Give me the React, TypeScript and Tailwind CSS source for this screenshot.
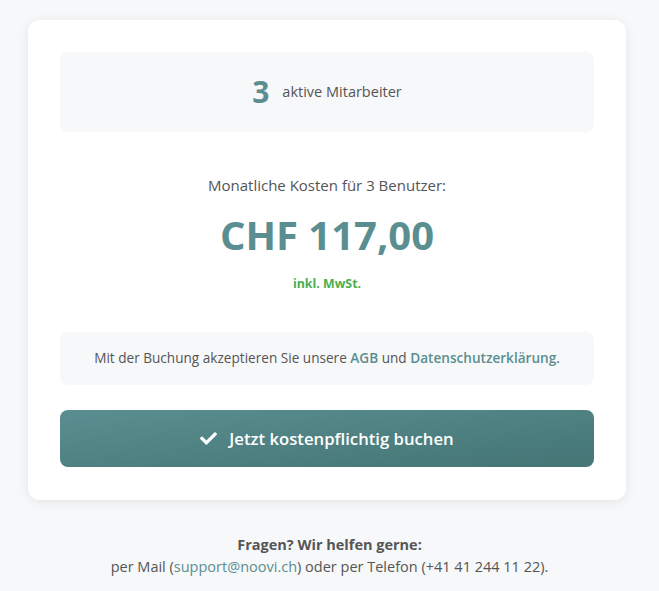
import { FaCheck } from "react-icons/fa";

const FONT = { fontFamily: '"Open Sans", "Noto Sans", sans-serif' };

export default function App() {
  return (
    <div className="min-h-[591px] bg-[#f7f8fa] pt-5 text-[#555]" style={FONT}>
      {/* Card */}
      <div className="ml-[28px] w-[598px] rounded-xl bg-white px-8 pt-8 pb-[33px] shadow-[0_2px_12px_rgba(0,0,0,0.08)]">
        {/* Users */}
        <div className="flex h-20 items-center justify-center gap-[13px] rounded-lg bg-[#f7f8fa]">
          <span className="text-[30px] font-bold leading-none text-[#5a8e90]">3</span>
          <span className="text-[14.5px] text-[#555]">aktive Mitarbeiter</span>
        </div>

        {/* Price */}
        <div className="flex flex-col items-center pt-[41px]">
          <p className="text-[15px] leading-6 text-[#555]">Monatliche Kosten für 3 Benutzer:</p>
          <p className="mt-[14px] text-[40px] font-bold leading-[48px] text-[#5a8e90]">CHF 117,00</p>
          <p className="mt-[17px] text-[12.4px] font-bold leading-4 text-[#4caf50]">inkl. MwSt.</p>
        </div>

        {/* Terms */}
        <div className="mt-[40px] flex h-[53px] items-center justify-center rounded-lg bg-[#f7f8fa] text-[13.6px] text-[#555]">
          <p>
            Mit der Buchung akzeptieren Sie unsere{" "}
            <a className="font-semibold text-[#5a8e90]">AGB</a> und{" "}
            <a className="font-semibold text-[#5a8e90]">Datenschutzerklärung</a>.
          </p>
        </div>

        {/* Button */}
        <button className="mt-[25px] flex h-[57px] w-full items-center justify-center gap-3 rounded-lg bg-gradient-to-br from-[#5a8e90] to-[#457575] text-[16.7px] font-semibold text-white">
          <FaCheck size={17} />
          Jetzt kostenpflichtig buchen
        </button>
      </div>

      {/* Footer */}
      <div className="pt-[34px] text-center text-[14.5px] leading-[22px] text-[#555]">
        <p className="font-bold">Fragen? Wir helfen gerne:</p>
        <p>
          per Mail (<a className="text-[#5a8e90]">support@noovi.ch</a>) oder per Telefon (+41 41 244 11 22).
        </p>
      </div>
    </div>
  );
}
